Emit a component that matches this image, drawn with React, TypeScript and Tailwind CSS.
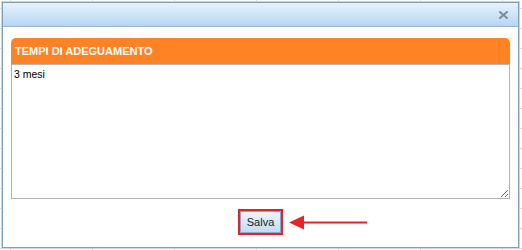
import React from "react";

export default function App() {
  return (
    <div className="relative w-[522px] h-[250px] overflow-hidden bg-white" style={{ fontFamily: '"Liberation Sans", Arial, sans-serif' }}>
      {/* faint spreadsheet grid behind */}
      <div className="absolute inset-0 bg-[linear-gradient(to_right,#d5dbe3_1px,transparent_1px),linear-gradient(to_bottom,#d5dbe3_1px,transparent_1px)] bg-[size:82px_100px,100%_20px] [background-position:10px_0,0_8px]" />
      <div className="absolute left-[2px] top-[2px] w-[517px] h-[246px] border border-[#7f9fbb] bg-white flex flex-col shadow-[0_0_0_1px_#c6d6e4]">
        {/* title bar */}
        <div className="h-[24px] shrink-0 border-b border-[#9cb6ce] bg-[linear-gradient(to_bottom,#e8f2fc,#b5d6f4)] flex items-center justify-end pr-[10px]">
          <svg width="9" height="8" viewBox="0 0 9 8">
            <path d="M1 1 L8 7 M8 1 L1 7" stroke="#7d8c9b" strokeWidth="2" strokeLinecap="square" />
          </svg>
        </div>
        {/* content */}
        <div className="flex flex-col px-[8px] pt-[11px]">
          <div className="h-[26px] rounded-t-[5px] bg-[#ff8224] flex items-center pl-[4px] text-white font-bold text-[11px]">
            TEMPI DI ADEGUAMENTO
          </div>
          <textarea
            readOnly
            value="3 mesi"
            className="h-[135px] w-full border border-[#b3b5bd] px-[2px] py-[3px] text-[10.5px] leading-[13px] text-black outline-none resize"
          />
        </div>
        <div className="flex justify-center pt-[10px]">
          <div className="relative">
            <div className="border-2 border-[#e3232b] p-0">
              <button className="h-[22px] w-[41px] border border-[#8fa9c3] bg-[linear-gradient(to_bottom,#eef5fd,#c2dbf3)] text-[11px] text-[#1a1a1a] flex items-center justify-center">
                Salva
              </button>
            </div>
            <div className="absolute left-[51px] top-[6px] flex items-center">
              <svg width="80" height="15" viewBox="0 0 80 15">
                <polygon points="0,7.5 15,0.5 15,14.5" fill="#e8232b" />
                <rect x="14" y="6.5" width="64" height="2" fill="#e8232b" />
              </svg>
            </div>
          </div>
        </div>
      </div>
    </div>
  );
}
